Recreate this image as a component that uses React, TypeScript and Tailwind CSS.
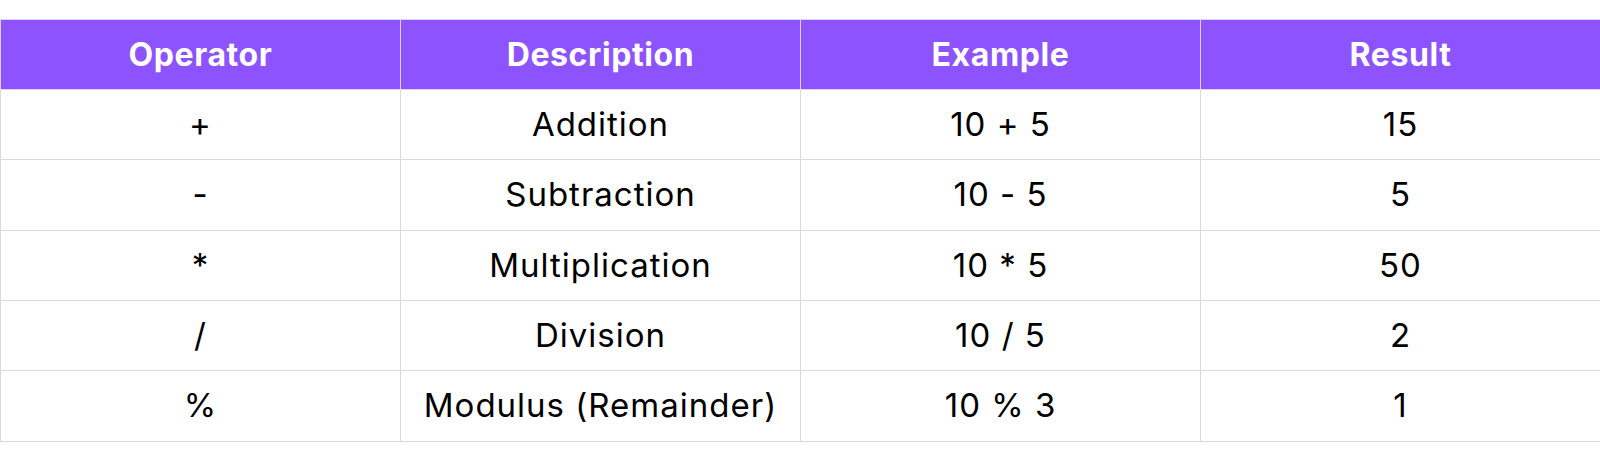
import React from "react";

const rows = [
  ["+", "Addition", "10 + 5", "15"],
  ["-", "Subtraction", "10 - 5", "5"],
  ["*", "Multiplication", "10 * 5", "50"],
  ["/", "Division", "10 / 5", "2"],
  ["%", "Modulus (Remainder)", "10 % 3", "1"],
];

export default function App() {
  return (
    <div className="w-[1600px] h-[468px] bg-white pt-[19px]" style={{ fontFamily: "Inter, 'Noto Sans', sans-serif" }}>
      <table className="w-[1600px] table-fixed border-collapse">
        <thead>
          <tr className="h-[70px] bg-[#8c53ff]">
            {["Operator", "Description", "Example", "Result"].map((h) => (
              <th key={h} className="w-[400px] border border-[#ddd3f5] text-white text-[32px] tracking-[0.6px] font-bold text-center align-middle">
                {h}
              </th>
            ))}
          </tr>
        </thead>
        <tbody>
          {rows.map((r, i) => (
            <tr key={i} className={i % 3 === 1 ? "h-[71px]" : "h-[70px]"}>
              {r.map((c, j) => (
                <td key={j} className="border border-[#d9d9d9] text-black text-[33px] tracking-[1px] text-center align-middle">
                  {c}
                </td>
              ))}
            </tr>
          ))}
        </tbody>
      </table>
    </div>
  );
}
